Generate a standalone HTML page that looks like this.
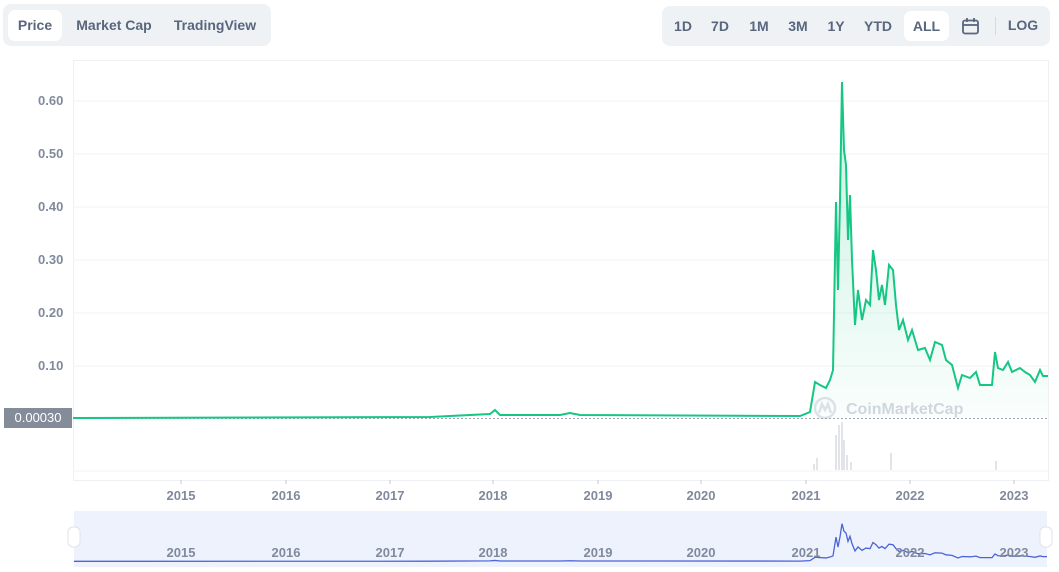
<!DOCTYPE html>
<html><head><meta charset="utf-8"><style>
body{margin:0;width:1059px;height:572px;background:#fff;font-family:"Liberation Sans",sans-serif;position:relative;overflow:hidden}
.tabs{position:absolute;left:3px;top:4px;width:268px;height:42px;background:#eff2f5;border-radius:8px}
.tab{position:absolute;top:6px;height:31px;line-height:31px;font-size:14px;font-weight:bold;color:#58667e;text-align:center}
.tab.on{background:#fff;border-radius:7px;color:#58667e}
.rt{position:absolute;left:662px;top:6px;width:388px;height:40px;background:#eff2f5;border-radius:8px}
.rt span{position:absolute;top:5px;height:30px;line-height:30px;font-size:14px;font-weight:bold;color:#58667e;text-align:center}
.yl{position:absolute;left:38px;font-size:13px;color:#808a9d;font-weight:bold}
.xl{position:absolute;top:488px;font-size:13px;color:#808a9d;font-weight:bold;transform:translateX(-50%)}
.nl{position:absolute;top:545px;font-size:13px;color:#808a9d;font-weight:bold;transform:translateX(-50%)}
</style></head><body>
<div class="tabs">
<div class="tab on" style="left:5px;width:54px">Price</div>
<div class="tab" style="left:66px;width:90px">Market Cap</div>
<div class="tab" style="left:163px;width:98px">TradingView</div>
</div>
<div class="rt">
<span style="left:8px;width:26px">1D</span>
<span style="left:44px;width:28px">7D</span>
<span style="left:82px;width:30px">1M</span>
<span style="left:121px;width:30px">3M</span>
<span style="left:161px;width:26px">1Y</span>
<span style="left:197px;width:38px">YTD</span>
<span style="left:242px;width:45px;background:#fff;border-radius:7px">ALL</span>
<svg style="position:absolute;left:299px;top:11px" width="19" height="19" viewBox="0 0 19 19" fill="none" stroke="#58667e" stroke-width="1.8"><rect x="2" y="3.5" width="15" height="13" rx="2"/><line x1="2" y1="8" x2="17" y2="8"/><line x1="6" y1="1" x2="6" y2="5"/><line x1="13" y1="1" x2="13" y2="5"/></svg>
<div style="position:absolute;left:333px;top:11px;width:1px;height:18px;background:#d5d9e0"></div>
<span style="left:343px;width:36px;top:4px">LOG</span>
</div>

<svg style="position:absolute;left:0;top:0" width="1059" height="572">
<defs><linearGradient id="g" x1="0" y1="0" x2="0" y2="1"><stop offset="0" stop-color="#16c784" stop-opacity="0.25"/><stop offset="1" stop-color="#16c784" stop-opacity="0.02"/></linearGradient></defs>
<rect x="73.5" y="60.5" width="975" height="420" fill="none" stroke="#eef0f3"/>
<g stroke="#f1f3f5"><line x1="73" y1="101" x2="1048" y2="101"/><line x1="73" y1="154" x2="1048" y2="154"/><line x1="73" y1="207" x2="1048" y2="207"/><line x1="73" y1="260" x2="1048" y2="260"/><line x1="73" y1="313" x2="1048" y2="313"/><line x1="73" y1="366" x2="1048" y2="366"/><line x1="73" y1="471" x2="1048" y2="471"/></g>
<line x1="73" y1="418.5" x2="1048" y2="418.5" stroke="#a0a6b0" stroke-dasharray="2,2"/>
<g stroke="#c4c9d3" stroke-width="1">
<line x1="817" y1="470" x2="817" y2="458"/><line x1="836" y1="470" x2="836" y2="435"/><line x1="839" y1="470" x2="839" y2="425"/><line x1="842" y1="470" x2="842" y2="422"/><line x1="844" y1="470" x2="844" y2="440"/><line x1="847" y1="470" x2="847" y2="455"/><line x1="851" y1="470" x2="851" y2="462"/><line x1="891" y1="470" x2="891" y2="453"/><line x1="996" y1="470" x2="996" y2="461"/><line x1="814" y1="470" x2="814" y2="464"/>
</g>
<g stroke="#c4c9d3"><line x1="181" y1="480" x2="181" y2="484"/><line x1="286" y1="480" x2="286" y2="484"/><line x1="390" y1="480" x2="390" y2="484"/><line x1="493" y1="480" x2="493" y2="484"/><line x1="598" y1="480" x2="598" y2="484"/><line x1="701" y1="480" x2="701" y2="484"/><line x1="806" y1="480" x2="806" y2="484"/><line x1="910" y1="480" x2="910" y2="484"/><line x1="1014" y1="480" x2="1014" y2="484"/></g>
<path id="p" d="M73,418 L430,417 L490,414 L495,410 L500,415 L560,415 L570,413 L580,415 L800,416 L810,412 L815,382 L820,385 L826,388 L830,380 L833,370 L836,202 L838,290 L840,200 L842,82 L844,150 L846,165 L848,240 L850,195 L852,260 L855,325 L858,290 L862,320 L866,300 L870,305 L873,250 L876,270 L879,300 L882,285 L885,305 L889,265 L893,270 L896,305 L899,330 L903,320 L908,340 L912,330 L918,350 L925,348 L930,360 L935,342 L942,345 L946,360 L952,365 L958,388 L962,375 L970,378 L976,372 L980,385 L992,385 L995,352 L998,368 L1003,370 L1008,362 L1012,372 L1020,368 L1025,372 L1030,375 L1035,382 L1040,370 L1043,376 L1048,376" fill="none" stroke="#16c784" stroke-width="2"/>
<path d="M810,412 L815,382 L820,385 L826,388 L830,380 L833,370 L836,202 L838,290 L840,200 L842,82 L844,150 L846,165 L848,240 L850,195 L852,260 L855,325 L858,290 L862,320 L866,300 L870,305 L873,250 L876,270 L879,300 L882,285 L885,305 L889,265 L893,270 L896,305 L899,330 L903,320 L908,340 L912,330 L918,350 L925,348 L930,360 L935,342 L942,345 L946,360 L952,365 L958,388 L962,375 L970,378 L976,372 L980,385 L992,385 L995,352 L998,368 L1003,370 L1008,362 L1012,372 L1020,368 L1025,372 L1030,375 L1035,382 L1040,370 L1043,376 L1048,376 L1048,418 L810,418Z" fill="url(#g)"/>
<g opacity="0.35" fill="none" stroke="#a6b0c3" stroke-width="2.5"><circle cx="825" cy="408" r="10"/><path d="M819,413 L822,404 L825,410 L828,404 L831,413"/></g>
<text x="846" y="414" font-family="Liberation Sans" font-weight="bold" font-size="16" fill="#a6b0c3" opacity="0.5">CoinMarketCap</text>
<rect x="74" y="511" width="973" height="56" fill="#eef2fd"/>
<g transform="translate(0,514.5) scale(1,0.112)"><path d="M74,418 L430,417 L490,414 L495,410 L500,415 L560,415 L570,413 L580,415 L800,416 L810,412 L815,382 L820,385 L826,388 L830,380 L833,370 L836,202 L838,290 L840,200 L842,82 L844,150 L846,165 L848,240 L850,195 L852,260 L855,325 L858,290 L862,320 L866,300 L870,305 L873,250 L876,270 L879,300 L882,285 L885,305 L889,265 L893,270 L896,305 L899,330 L903,320 L908,340 L912,330 L918,350 L925,348 L930,360 L935,342 L942,345 L946,360 L952,365 L958,388 L962,375 L970,378 L976,372 L980,385 L992,385 L995,352 L998,368 L1003,370 L1008,362 L1012,372 L1020,368 L1025,372 L1030,375 L1035,382 L1040,370 L1043,376 L1047,376" fill="none" stroke="#4a64d8" stroke-width="12" vector-effect="non-scaling-stroke" style="stroke-width:1.3"/></g>
<rect x="68" y="527" width="12" height="20" rx="5" fill="#fff" stroke="#e0e3ea"/>
<rect x="1040" y="527" width="12" height="20" rx="5" fill="#fff" stroke="#e0e3ea"/>
</svg>
<div class="yl" style="top:93px">0.60</div>
<div class="yl" style="top:146px">0.50</div>
<div class="yl" style="top:199px">0.40</div>
<div class="yl" style="top:252px">0.30</div>
<div class="yl" style="top:305px">0.20</div>
<div class="yl" style="top:358px">0.10</div>
<div style="position:absolute;left:4px;top:408px;width:68px;height:20px;background:#858c99;color:#fff;font-size:13px;line-height:20px;text-align:center">0.00030</div>
<div class="xl" style="left:181px">2015</div><div class="xl" style="left:286px">2016</div><div class="xl" style="left:390px">2017</div><div class="xl" style="left:493px">2018</div><div class="xl" style="left:598px">2019</div><div class="xl" style="left:701px">2020</div><div class="xl" style="left:806px">2021</div><div class="xl" style="left:910px">2022</div><div class="xl" style="left:1014px">2023</div>
<div class="nl" style="left:181px">2015</div><div class="nl" style="left:286px">2016</div><div class="nl" style="left:390px">2017</div><div class="nl" style="left:493px">2018</div><div class="nl" style="left:598px">2019</div><div class="nl" style="left:701px">2020</div><div class="nl" style="left:806px">2021</div><div class="nl" style="left:910px">2022</div><div class="nl" style="left:1014px">2023</div>
</body></html>
